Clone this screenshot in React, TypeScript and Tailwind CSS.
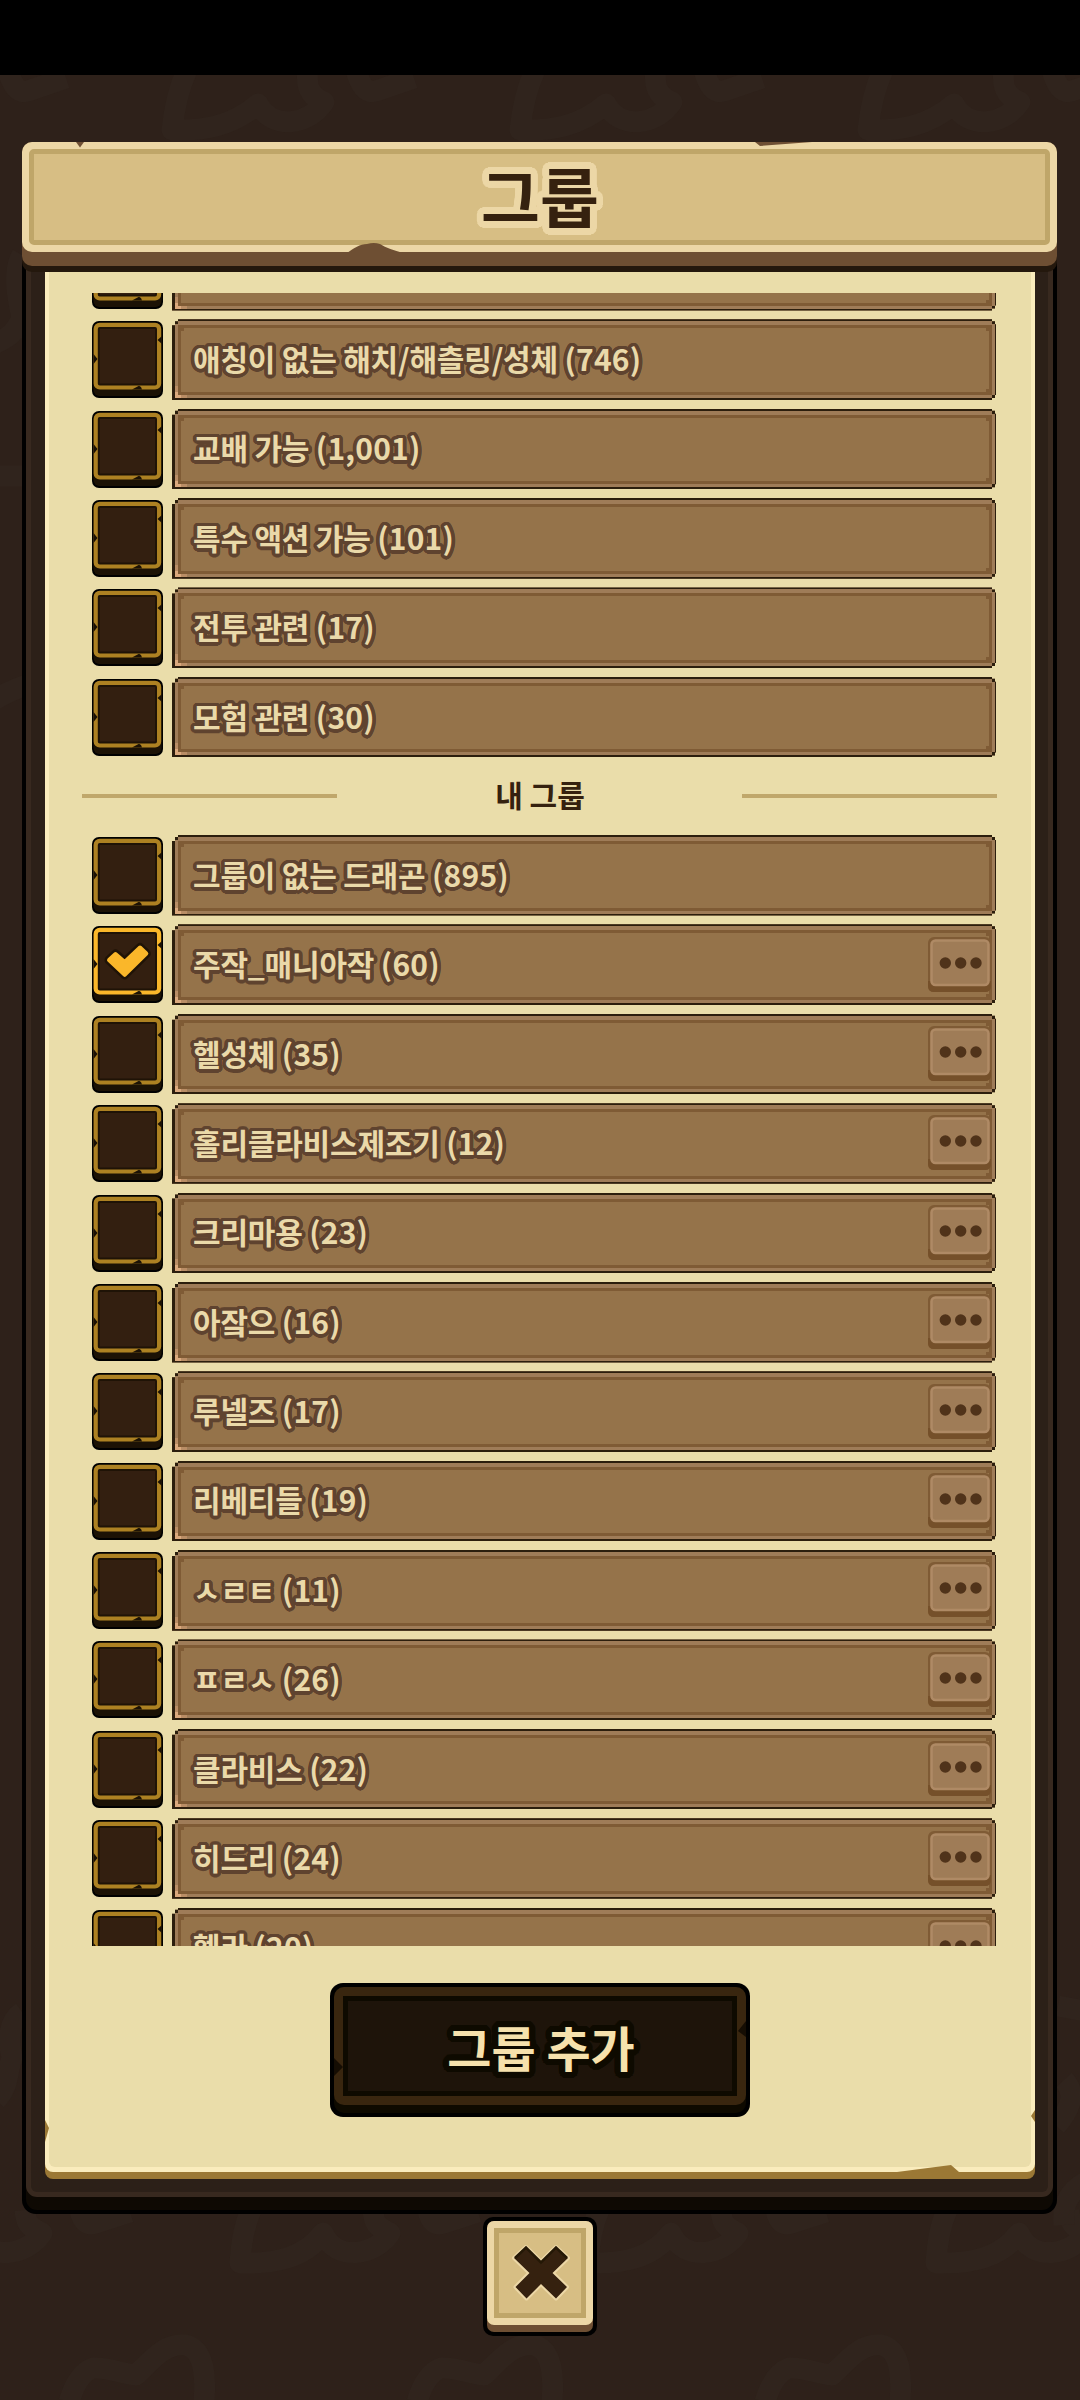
import React, { useState } from 'react';

type Group = {
  id: string;
  name: string;
  count: string;
  editable?: boolean;
};

const systemGroups: Group[] = [
  { id: 's0', name: '', count: '' },
  { id: 's1', name: '애칭이 없는 해치/해츨링/성체', count: '746' },
  { id: 's2', name: '교배 가능', count: '1,001' },
  { id: 's3', name: '특수 액션 가능', count: '101' },
  { id: 's4', name: '전투 관련', count: '17' },
  { id: 's5', name: '모험 관련', count: '30' },
];

const myGroups: Group[] = [
  { id: 'm0', name: '그룹이 없는 드래곤', count: '895' },
  { id: 'm1', name: '주작_매니아작', count: '60', editable: true },
  { id: 'm2', name: '헬성체', count: '35', editable: true },
  { id: 'm3', name: '홀리클라비스제조기', count: '12', editable: true },
  { id: 'm4', name: '크리마용', count: '23', editable: true },
  { id: 'm5', name: '아잨으', count: '16', editable: true },
  { id: 'm6', name: '루넬즈', count: '17', editable: true },
  { id: 'm7', name: '리베티들', count: '19', editable: true },
  { id: 'm8', name: 'ㅅㄹㅌ', count: '11', editable: true },
  { id: 'm9', name: 'ㅍㄹㅅ', count: '26', editable: true },
  { id: 'm10', name: '클라비스', count: '22', editable: true },
  { id: 'm11', name: '히드리', count: '24', editable: true },
  { id: 'm12', name: '헬라', count: '20', editable: true },
];

// Rounded text outline: a ring of hard shadows around each glyph
function outline(radius: number, color: string) {
  const steps = 32;
  const ring = Array.from({ length: steps }, (_, i) => {
    const a = (i / steps) * Math.PI * 2;
    return `${(Math.cos(a) * radius).toFixed(2)}px ${(Math.sin(a) * radius).toFixed(2)}px 0 ${color}`;
  });
  const inner = Array.from({ length: 12 }, (_, i) => {
    const a = (i / 12) * Math.PI * 2;
    return `${(Math.cos(a) * radius * 0.5).toFixed(2)}px ${(Math.sin(a) * radius * 0.5).toFixed(2)}px 0 ${color}`;
  });
  return { textShadow: [...ring, ...inner].join(', ') };
}

const rowOutline = outline(3.5, '#5f432f');
const titleOutline = outline(6.8, '#ecd7a6');
const buttonOutline = outline(6.3, '#0e0a00');

// Faint cloud outlines, repeated every 348px
function Backdrop() {
  return (
    <svg className="absolute inset-0" width="1080" height="2400" viewBox="0 0 1080 2400" fill="none">
      <g stroke="#30241d" strokeWidth="21" strokeLinejoin="round">
        {[-348, 0, 348, 696].map((x) => (
          <path
            key={`t${x}`}
            transform={`translate(${x} 0)`}
            d="M187 70C178 90 174 110 172 130C205 131 232 126 258 104C272 130 308 126 324 102C308 96 306 84 308 70M356 70C360 85 366 94 376 91L414 78"
          />
        ))}
        {[-348, 0, 348, 696].map((x) => (
          <path
            key={`b${x}`}
            transform={`translate(${x} 0)`}
            d="M251 2210C243 2228 241 2245 240 2263C275 2264 305 2258 323 2233C336 2262 375 2256 390 2233C375 2226 374 2222 373 2210M428 2210C430 2222 436 2226 444 2223L478 2212M417 2402C422 2385 430 2372 441 2368C457 2367 470 2374 484 2375C500 2360 512 2343 534 2345C552 2350 554 2375 552 2402"
          />
        ))}
        <path d="M22 255C12 272 18 300 22 318C16 332 8 338 -6 344M-6 476H30M-6 700C8 692 16 688 30 684M22 2012C8 2022 8 2040 12 2058C6 2074 10 2085 -4 2100M1058 2006L1090 2012M1064 2080C1078 2095 1068 2112 1056 2126M1090 2180C1068 2190 1062 2205 1064 2225" />
      </g>
    </svg>
  );
}

function Checkbox({ checked }: { checked: boolean }) {
  return (
    <svg width="71" height="77" viewBox="0 0 71 77" fill="none">
      <rect width="71" height="77" rx="7" fill="#000" />
      <rect x="1.5" y="2" width="68" height="73" rx="6" fill="#1c1205" />
      <rect x="3.7" y="3.9" width="63.4" height="62.6" rx="4" stroke={checked ? '#fab72a' : '#ad8122'} strokeWidth="4.2" fill="#1f1306" />
      <rect x="7.8" y="8" width="55.2" height="54.5" fill="#331f10" />
      <path d="M1.5 33L5.5 38L1.5 43ZM70 15L65.5 19L70 23ZM40 68.5L47 64.8L49 66L50 68.5Z" fill="#1c1205" />
      {checked && (
        <g strokeLinejoin="round">
          <path d="M17 34L23.5 28L32.7 36L48 21.5L54.3 27.5L32.7 48.8Z" stroke="#1f1306" strokeWidth="9" />
          <path d="M17 34L23.5 28L32.7 36L48 21.5L54.3 27.5L32.7 48.8Z" fill="#fab72a" stroke="#fab72a" strokeWidth="4" />
        </g>
      )}
    </svg>
  );
}

function MoreButton() {
  return (
    <button className="h-[55px] w-[63px]">
      <svg width="63" height="55" viewBox="0 0 63 55" fill="none">
        <rect width="63" height="55" rx="6" fill="#7f5b35" />
        <path d="M0 44H63V49Q63 55 57 55H6Q0 55 0 49Z" fill="#75502a" />
        <rect x="3.5" y="3.5" width="57" height="44.5" rx="4" fill="#9f7c57" stroke="#af8a65" strokeWidth="2.6" />
        <circle cx="17.3" cy="26" r="5.7" fill="#50331a" />
        <circle cx="32.7" cy="26" r="5.7" fill="#50331a" />
        <circle cx="48" cy="26" r="5.7" fill="#50331a" />
      </svg>
    </button>
  );
}

function GroupRow({ group, checked, onToggle }: { group: Group; checked: boolean; onToggle: () => void }) {
  return (
    <div className="flex h-[80.6px] shrink-0 gap-[9px] pr-px pl-[10px]">
      <button className="mt-[2px] h-[77px] w-[71px] shrink-0" onClick={onToggle}>
        <Checkbox checked={checked} />
      </button>
      <div className="relative flex-1 border-t-2 border-r border-b-2 border-l-[3px] border-[#2c1e0d] bg-[#9f7c58] pt-[4px] pr-[3px] pb-[3px] pl-[3px] [clip-path:polygon(6px_0,6px_2px,3px_2px,3px_6px,0_6px,0_100%,calc(100%-4px)_100%,calc(100%-4px)_calc(100%-2px),calc(100%-1px)_calc(100%-2px),calc(100%-1px)_calc(100%-5px),100%_calc(100%-5px),100%_5px,calc(100%-1px)_5px,calc(100%-1px)_2px,calc(100%-4px)_2px,calc(100%-4px)_0)]">
        <div className="flex h-full items-center justify-between border-3 border-[#7f5b35] bg-[#95734a] pl-[12px]">
          <span className="-mt-[4px] text-[30px] leading-none font-bold tracking-[-0.2px] whitespace-pre text-[#ead9a9]" style={rowOutline}>
            {group.name && (
              <>
                {group.name} <span className="tracking-[0.2px]">({group.count})</span>
              </>
            )}
          </span>
          {group.editable && (
            <div className="-mt-[2px] -mr-[2px] h-[55px]">
              <MoreButton />
            </div>
          )}
        </div>
        <i className="absolute top-0 left-0 h-[3px] w-[3px] bg-[#2c1e0d]" />
        <i className="absolute top-0 right-0 h-[3px] w-[3px] bg-[#2c1e0d]" />
        <i className="absolute right-0 bottom-0 h-[3px] w-[3px] bg-[#2c1e0d]" />
        <i className="absolute top-[7px] left-[6px] h-[3px] w-[3px] bg-[#7f5b35]" />
        <i className="absolute top-[7px] right-[6px] h-[3px] w-[3px] bg-[#7f5b35]" />
        <i className="absolute right-[6px] bottom-[6px] h-[3px] w-[3px] bg-[#7f5b35]" />
        <i className="absolute bottom-0 left-0 h-[12px] w-[3px] bg-[#b98d65]" />
        <i className="absolute bottom-0 left-0 h-[3px] w-[12px] bg-[#b98d65]" />
        <i className="absolute bottom-0 left-0 h-[6px] w-[3px] bg-[#dba97d]" />
        <i className="absolute bottom-0 left-0 h-[3px] w-[6px] bg-[#dba97d]" />
      </div>
    </div>
  );
}

function Header() {
  return (
    <header className="relative z-10 mx-auto h-[130px] w-[1035px] rounded-[10px] bg-[#24180d] pb-[6px]">
      <div className="h-full rounded-[10px] bg-[#6e4f33] pb-[14px]">
        <div className="h-full rounded-[10px] bg-[#ecd7a6] p-[7px]">
          <div className="flex h-full items-center justify-center rounded-[5px] border-5 border-[#bfa669] bg-[#d7be84]">
            <h1 className="-mt-[6px] ml-px text-[64px] leading-none font-bold text-[#35210f]" style={titleOutline}>
              그룹
            </h1>
          </div>
        </div>
      </div>
      <svg className="absolute inset-0" width="1035" height="130" viewBox="0 0 1035 130" fill="#6e4f33">
        <path d="M54 0H62L58 5.5Z" />
        <path d="M733 0L738 4L790 0Z" />
        <path d="M325 111C332 106 338 102 345 102Q352 100 358 102C364 106 372 108 381 111Z" />
      </svg>
    </header>
  );
}

export default function App() {
  const [selected, setSelected] = useState<string[]>(['m1']);

  const toggle = (id: string) => {
    setSelected((prev) => (prev.includes(id) ? prev.filter((s) => s !== id) : [...prev, id]));
  };

  const renderRow = (group: Group) => (
    <GroupRow key={group.id} group={group} checked={selected.includes(group.id)} onToggle={() => toggle(group.id)} />
  );

  return (
    <div className="relative h-[2400px] w-[1080px] overflow-hidden bg-[#2e211a] font-['Noto_Sans_CJK_KR',sans-serif]">
      <Backdrop />
      <div className="relative flex h-full flex-col">
        <div className="h-[75px] shrink-0 bg-black" />
        <div className="mt-[67px] pr-px">
          <Header />
        </div>

        {/* Panel frame */}
        <div className="-mt-[12px] ml-[22px] h-[1954px] w-[1035px] shrink-0 rounded-b-[14px] bg-black px-1 pb-1">
          <div className="h-full rounded-b-[11px] bg-[#0e0903] pb-[13px]">
            <div className="h-full rounded-b-[11px] bg-[#38291f] px-[5px] pb-[5px]">
              <div className="h-full rounded-b-[6px] bg-[#2c2018] pr-[13px] pb-[13px] pl-[14px]">
                <div className="relative h-full rounded-b-[8px] bg-[#9b7835] pb-[7px]">
                  <div className="h-full rounded-b-[8px] bg-[#faecbd] px-1 pb-[5px]">
                    <div className="flex h-full flex-col items-center rounded-b-[6px] bg-[#eaddaa] pt-[33px] pr-[34px] pl-[33px]">
                      <div className="h-[1653px] w-full shrink-0 overflow-hidden">
                        <div className="-mt-[63.1px] flex flex-col gap-[8.8px]">{systemGroups.map(renderRow)}</div>
                        <div className="flex h-[77.5px] items-center justify-between">
                          <div className="h-[4px] w-[255px] bg-[#c0a76b]" />
                          <h2 className="-mt-[4px] ml-px text-[30px] leading-none font-bold text-[#35210f]">내 그룹</h2>
                          <div className="h-[4px] w-[255px] bg-[#c0a76b]" />
                        </div>
                        <div className="flex flex-col gap-[8.8px]">{myGroups.map(renderRow)}</div>
                      </div>

                      <button className="relative mt-[37px] h-[134px] w-[420px] shrink-0 rounded-[13px] bg-black p-1">
                        <div className="h-full rounded-[10px] bg-[#0e0a00] pb-[8px]">
                          <div className="h-full rounded-[10px] bg-[#39260f] p-[9px]">
                            <div className="flex h-full items-center justify-center border-5 border-[#0e0a00] bg-[#1e140a]">
                              <span className="ml-[3px] text-[48px] leading-none font-bold text-[#f6e1ac]" style={buttonOutline}>
                                그룹 추가
                              </span>
                            </div>
                          </div>
                        </div>
                        <svg className="absolute inset-0" width="420" height="134" viewBox="0 0 420 134" fill="#150d03">
                          <path d="M4 75L13 84L4 93ZM416 38L408 48L416 54Z" />
                        </svg>
                      </button>
                    </div>
                  </div>
                  <svg className="absolute bottom-0 left-0" width="990" height="80" viewBox="0 0 990 80" fill="#9b7835">
                    <path d="M0 21L4 29L0 43ZM990 11L986 17L990 23ZM852 73L906 66L914 73Z" />
                  </svg>
                </div>
              </div>
            </div>
          </div>
        </div>

        {/* Close */}
        <button className="mt-[3px] ml-[483px] h-[119px] w-[114px] shrink-0 rounded-[10px] bg-black p-1">
          <div className="h-full rounded-[7px] bg-[#6e4f33] pb-[7px]">
            <div className="h-full rounded-[7px] bg-[#ecd7a6] p-[7px]">
              <div className="flex h-full items-center justify-center border-5 border-[#bfa669] bg-[#d7be84]">
                <svg className="ml-px" width="60" height="60" viewBox="0 0 60 60">
                  <path
                    d="M15 4L30 18.5L45 4L57 15L41.5 30L56 44L45 55.5L30 41L15.5 55.5L4.5 44L18.5 30L3 15Z"
                    fill="#35210f"
                    stroke="#ecd7a6"
                    strokeWidth="4"
                    paintOrder="stroke"
                    strokeLinejoin="round"
                  />
                  <path d="M4 15L15 4.5L30 19.5L45 4.5L56 15" fill="none" stroke="#241806" strokeWidth="2.5" />
                </svg>
              </div>
            </div>
          </div>
        </button>
      </div>
    </div>
  );
}
